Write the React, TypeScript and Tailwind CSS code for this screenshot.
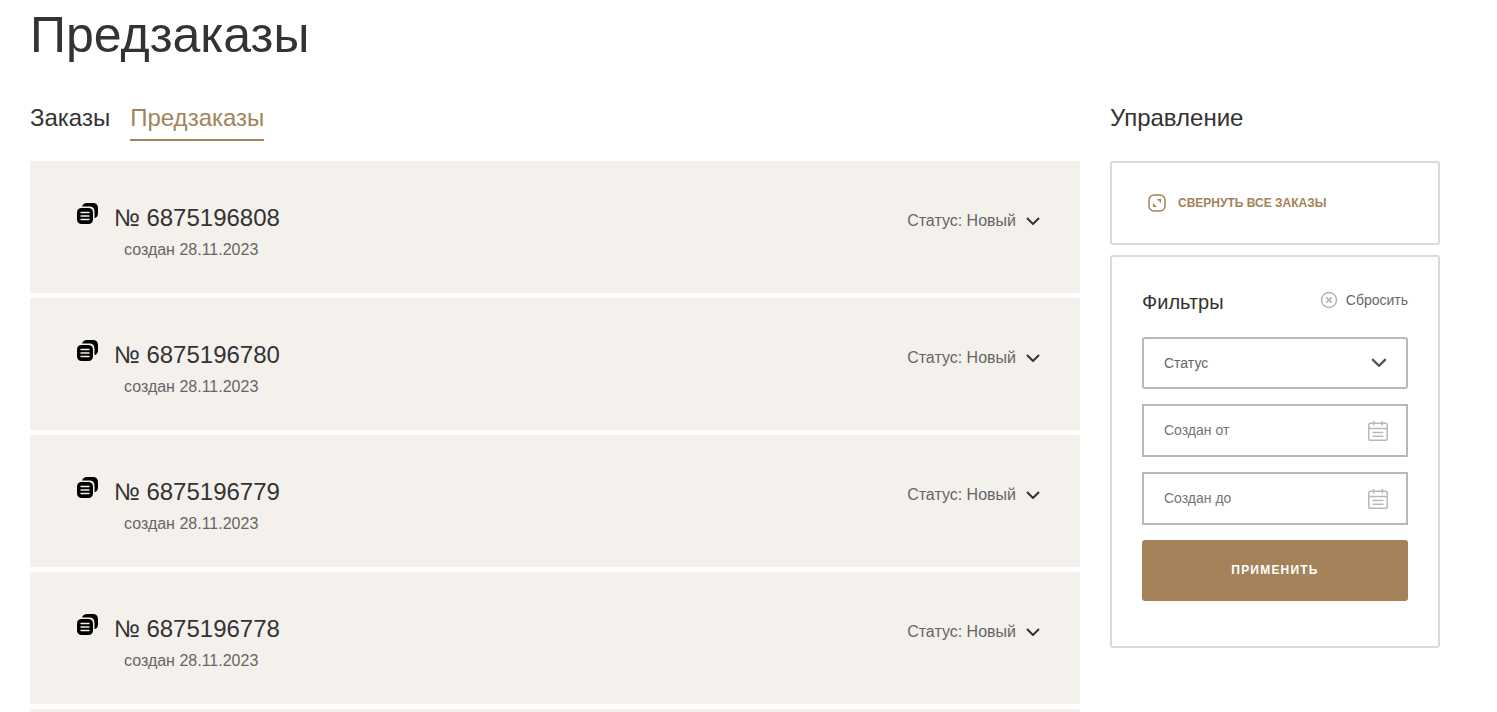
import { useState } from "react";

const orders = [
  { number: "6875196808", date: "28.11.2023", status: "Новый" },
  { number: "6875196780", date: "28.11.2023", status: "Новый" },
  { number: "6875196779", date: "28.11.2023", status: "Новый" },
  { number: "6875196778", date: "28.11.2023", status: "Новый" },
  { number: "6875196777", date: "28.11.2023", status: "Новый" },
];

export default function App() {
  const [status, setStatus] = useState("");
  const [from, setFrom] = useState("");
  const [to, setTo] = useState("");

  const reset = () => {
    setStatus("");
    setFrom("");
    setTo("");
  };

  return (
    <main className="min-h-screen bg-white pr-[57px] pl-[30px] font-['Liberation_Sans',Arial,sans-serif] text-[#333]">
      <h1 className="text-[50px] leading-[70px]">Предзаказы</h1>

      <div className="mt-8 flex items-start gap-[30px]">
        <section className="min-w-0 flex-1">
          <nav className="flex gap-5 text-2xl leading-8">
            <a href="#orders" className="border-b-2 border-transparent pb-[5px]">
              Заказы
            </a>
            <a href="#preorders" className="border-b-2 border-[#a58259] pb-[5px] text-[#a58259]">
              Предзаказы
            </a>
          </nav>
          <div className="mt-5 grid gap-[5px]">
            {orders.map((order) => (
              <OrderCard key={order.number} {...order} />
            ))}
          </div>
        </section>

        <aside className="w-[330px] shrink-0">
          <h2 className="text-2xl leading-8">Управление</h2>

          <div className="mt-[27px] rounded-[3px] border-2 border-[#dbdad6] px-9 py-[30px]">
            <button type="button" className="flex items-center gap-3 text-xs leading-5 font-bold text-[#a58259] uppercase">
              <CollapseIcon />
              Свернуть все заказы
            </button>
          </div>

          <form
            className="mt-[10px] rounded-[3px] border-2 border-[#dbdad6] px-[30px] pt-[30px] pb-[45px]"
            onSubmit={(e) => e.preventDefault()}
          >
            <div className="flex items-start justify-between">
              <h3 className="text-xl leading-[30px]">Фильтры</h3>
              <button type="button" onClick={reset} className="flex items-center gap-2 text-sm leading-[26px] text-[#666]">
                <ResetIcon />
                Сбросить
              </button>
            </div>

            <div className="mt-5 grid gap-[15px]">
              <div className="relative">
                <label htmlFor="status" className="sr-only">
                  Статус
                </label>
                <select
                  id="status"
                  value={status}
                  onChange={(e) => setStatus(e.target.value)}
                  className="block h-[52px] w-full appearance-none rounded-[3px] border-2 border-[#b8b8b8] bg-white px-5 text-sm text-[#666]"
                >
                  <option value="">Статус</option>
                  <option value="new">Новый</option>
                </select>
                <Chevron className="pointer-events-none absolute top-[21px] right-[21px] h-[9px] w-4 text-[#555]" />
              </div>
              <DateField id="from" label="Создан от" value={from} onChange={setFrom} />
              <DateField id="to" label="Создан до" value={to} onChange={setTo} />
              <button
                type="submit"
                className="h-[61px] rounded-[3px] bg-[#a58259] pb-0.5 text-xs font-bold tracking-widest text-white uppercase"
              >
                Применить
              </button>
            </div>
          </form>
        </aside>
      </div>
    </main>
  );
}

function OrderCard({ number, date, status }: { number: string; date: string; status: string }) {
  return (
    <article className="flex items-start justify-between bg-[#f4f1ec] pt-[41px] pr-10 pb-[31px] pl-[47px]">
      <div className="flex items-start gap-4">
        <button type="button" aria-label="Скопировать номер" className="pt-px">
          <CopyIcon />
        </button>
        <div>
          <h2 className="text-2xl leading-8">№ {number}</h2>
          <p className="mt-1 ml-[10px] leading-6 text-[#666]">создан {date}</p>
        </div>
      </div>
      <button type="button" className="mt-[7px] flex items-center gap-[10px] leading-6 text-[#666]">
        Статус: {status}
        <Chevron className="h-2 w-[14px] text-[#333]" />
      </button>
    </article>
  );
}

type DateFieldProps = {
  id: string;
  label: string;
  value: string;
  onChange: (value: string) => void;
};

function DateField({ id, label, value, onChange }: DateFieldProps) {
  return (
    <div className="flex h-[53px] items-center border-2 border-[#b8b8b8] pr-[18px] pb-0.5 pl-5">
      <label htmlFor={id} className="sr-only">
        {label}
      </label>
      <input
        id={id}
        type="text"
        placeholder={label}
        value={value}
        onChange={(e) => onChange(e.target.value)}
        className="min-w-0 flex-1 text-sm text-[#666] outline-none placeholder:text-[#757575]"
      />
      <CalendarIcon />
    </div>
  );
}

function Chevron({ className }: { className: string }) {
  return (
    <svg viewBox="0 0 14 8" fill="none" stroke="currentColor" strokeWidth="2" className={className}>
      <path d="M1 1l6 6 6-6" />
    </svg>
  );
}

function CopyIcon() {
  return (
    <svg viewBox="0 0 21 21" fill="none" className="size-[21px]">
      <path
        d="M5 3.500C5.800 1.200 7.300 0 10 0h5.500C19.200 0 21 1.800 21 5.500V10c0 2.900-1.100 4.700-3.500 5.300V9c0-3.800-1.700-5.500-5.500-5.500z"
        fill="#000"
      />
      <rect x="0" y="5" width="16" height="16" rx="4.500" fill="#000" />
      <path d="M4 9.500h8M4 13h8M4 16.500h8" stroke="#f4f1ec" strokeWidth="1.400" strokeLinecap="round" />
    </svg>
  );
}

function CollapseIcon() {
  return (
    <svg viewBox="0 0 18 18" fill="none" stroke="currentColor" strokeWidth="1.500" className="size-[18px]">
      <rect x="1" y="1" width="16" height="16" rx="5" />
      <path d="M9.500 5.800h2.800v2.800M8.300 12.200H5.700V9.400" />
    </svg>
  );
}

function ResetIcon() {
  return (
    <svg viewBox="0 0 18 18" fill="none" stroke="#b5b5b5" strokeWidth="1.500" className="size-[18px]">
      <circle cx="9" cy="9" r="7.500" />
      <path d="M6.300 6.300l5.400 5.400M11.700 6.300l-5.400 5.400" strokeWidth="1.800" />
    </svg>
  );
}

function CalendarIcon() {
  return (
    <svg viewBox="0 0 20 20" fill="none" stroke="#b8b8b8" strokeWidth="1.500" className="mt-0.5 size-5">
      <rect x=".75" y="2.200" width="18.500" height="17" rx="1.800" />
      <path d="M.7 7.500h18.600M5.700 0v4.500M14.300 0v4.500M4.500 11.500h11M4.500 15.300h11" />
    </svg>
  );
}
